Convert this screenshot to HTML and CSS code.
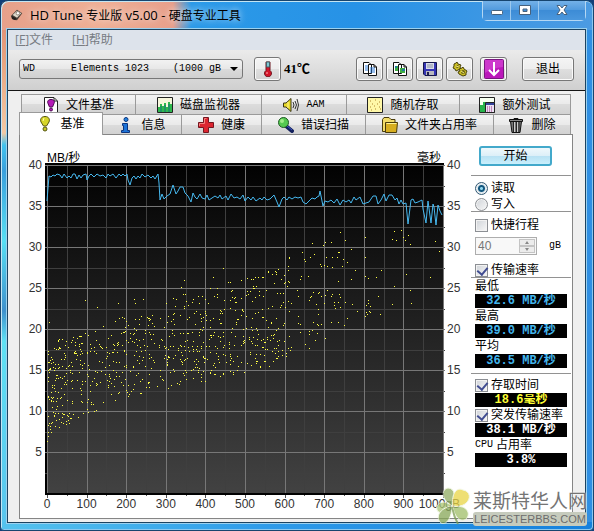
FILE: index.html
```html
<!DOCTYPE html>
<html lang="zh-CN">
<head>
<meta charset="utf-8">
<title>HD Tune 专业版 v5.00 - 硬盘专业工具</title>
<link rel="stylesheet" href="styles.css">
</head>
<body>
<div class="window">
  <header class="titlebar">
    <svg class="app-icon" viewBox="0 0 16 16"><path d="M1 9 8 2l6 4-6 8-5-1z" fill="#463c36"/><path d="M3 8 8 3l5 3-5 5z" fill="#ddd6c8"/><circle cx="9" cy="6" r="2" fill="#fff" stroke="#887c70"/><path d="m2 9 5 3-1 2-4-2z" fill="#221e1c"/></svg>
    <h1>HD Tune <span>专业版</span> v5.00 - <span>硬盘专业工具</span></h1>
    <div class="caption-buttons">
      <button aria-label="最小化"><svg viewBox="0 0 14 12"><rect x="1.500" y="6.500" width="11" height="4" rx="1" fill="#fff" stroke="#47617c"/></svg></button>
      <button aria-label="最大化"><svg viewBox="0 0 14 12"><path d="M1.500 1.500h11v9h-11zM5 5v2.500h4V5z" fill="#fff" fill-rule="evenodd" stroke="#47617c"/></svg></button>
      <button aria-label="关闭" class="close"><svg viewBox="0 0 14 12"><path d="M2 1.500h3l2 2.500 2-2.500h3L9 6l3 4.500H9L7 8l-2 2.500H2L5 6z" fill="#fff" stroke="#47617c"/></svg></button>
    </div>
  </header>
  <main class="client">
    <nav class="menubar"><a href="#file">[<u>F</u>]文件</a><a href="#help">[<u>H</u>]帮助</a></nav>
    <div class="toolbar">
      <div class="combo"><select aria-label="硬盘"><option>WD&nbsp;&nbsp;&nbsp;&nbsp;&nbsp;&nbsp;Elements 1023&nbsp;&nbsp;&nbsp;&nbsp;(1000 gB)</option></select></div>
      <button class="tool" aria-label="温度"><svg viewBox="0 0 16 16"><path d="M7 1h3v8.500a3.500 3.500 0 1 1-4 0V1z" fill="#d3152a" stroke="#6b1820"/><path d="M6.500 1h3v5h-3z" fill="#7ec8d4" stroke="#44616a"/><path d="M7 11v2" stroke="#ffb0b0"/></svg></button>
      <output class="temperature">41℃</output>
      <div class="tools">
        <button class="tool" aria-label="复制文本"><svg viewBox="0 0 16 16"><path d="M1.500 1.500H7L9.500 4v8.500h-8zM6.500 3.500H12L14.500 6v8.500h-8z" fill="#fff" stroke="#111"/><path d="M3 5h3M3 7h3M3 9h3M8 7h5M8 9h5M8 11h5" stroke="#2c7bd8"/><path d="M12 3.500V6h2.500" fill="none" stroke="#111"/></svg></button>
        <button class="tool" aria-label="复制图像"><svg viewBox="0 0 16 16"><path d="M1.500 1.500H7L9.500 4v8.500h-8zM6.500 3.500H12L14.500 6v8.500h-8z" fill="#fff" stroke="#111"/><path d="M3 5h3v5H3zM8 7h5v5H8z" fill="#3ead42"/><path d="M3 5h2v2H3zM10 8h3v2h-3z" fill="#207a9c"/><path d="M12 3.500V6h2.500" fill="none" stroke="#111"/></svg></button>
        <button class="tool" aria-label="保存"><svg viewBox="0 0 16 16"><path d="M1.500 1.500h13v13H3L1.500 13z" fill="#3434b4" stroke="#15154a"/><path d="M4 2h8v6H4z" fill="#d8dce8"/><path d="M5 4h6M5 6h6" stroke="#8990a5"/><path d="M4 10h8v4H4z" fill="#b9b9bf"/><path d="M5 11h2v3H5z" fill="#202050"/></svg></button>
        <button class="tool" aria-label="选项"><svg viewBox="0 0 16 16"><g fill="#cbbf24" stroke="#4a430b"><path d="m2 3 2-1 1-1 1 2 3 1-1 2 1 2-3 1-2 1-1-2-2-1 1-2z"/><path d="m7 8 3-1 1-1 1 2 3 2-1 2v2l-3 1-2-1-2-1-1-2 2-1z"/></g><circle cx="5.500" cy="5.500" r="1.500" fill="#6c6419"/><circle cx="11" cy="11" r="2" fill="#6c6419"/><path d="m9 10 3 2M4 5l3 1" stroke="#f3ec76"/></svg></button>
        <button class="tool last" aria-label="最小化到托盘"><svg class="large" viewBox="0 0 20 20"><rect x=".5" y=".5" width="19" height="19" rx="1" fill="#bb18ba" stroke="#7a1680"/><path d="M1 1h18v7Q8 9 1 14z" fill="#d94ed8" opacity=".6"/><path d="M10 3v13M5 11l5 5 5-5" fill="none" stroke="#fff" stroke-width="2"/></svg></button>
      </div>
      <button class="exit">退出</button>
    </div>
    <div class="workspace">
      <div class="tabs back" role="tablist">
        <button role="tab"><svg viewBox="0 0 16 16"><path d="M1.500.5H11L14.500 4v11.500h-13z" fill="#fff" stroke="#222"/><path d="M11 1v3h3" fill="none" stroke="#222"/><path d="M8 2.500c3 0 4 2 3 4L9.500 10h-3L5 6.500c-1-2 0-4 3-4z" fill="#b51ab8" stroke="#4d0c54"/><circle cx="8" cy="12.500" r="1.500" fill="#b51ab8" stroke="#4d0c54"/></svg>文件基准</button>
        <button role="tab"><svg viewBox="0 0 16 16"><path d="M.5.5h15v15H.5z" fill="#f6f6dc" stroke="#222"/><path d="M1 10h2V7h2v2h2V6h2v4h2V5h2v2h2v8H1z" fill="#2fb84d"/><path d="M4 9v6M8 8v7M12 7v8" stroke="#13707e"/></svg>磁盘监视器</button>
        <button role="tab"><svg viewBox="0 0 16 16"><path d="M.5 6H3l5-4.500v13L3 10H.5z" fill="#e7d928" stroke="#393514"/><path d="M5 5v6" stroke="#fff59b"/><path d="M10 5q2 3 0 6M12 4q3 4 0 8M14 2q3 6 0 12" fill="none" stroke="#333"/></svg><span class="latin">AAM</span></button>
        <button role="tab"><svg viewBox="0 0 16 16"><path d="M.5.5h15v15H.5z" fill="#fff8a8" stroke="#222"/><path d="M3 4h1m4-1h1m3 2h1M5 7h1m4 0h1M3 10h1m3-1h1m4 1h1m-9 3h1m3-1h1m4 0h1" stroke="#ad852c"/></svg>随机存取</button>
        <button role="tab"><svg viewBox="0 0 16 16"><path d="M.5.5h15v15H.5z" fill="#f6fff0" stroke="#222"/><path d="M1 8h3V5h3v10H1z" fill="#27b34b"/><path d="M6.500 5.500h9v10h-9z" fill="#e9e2f3" stroke="#222"/><path d="M7 6h8v2H7z" fill="#35439b"/><path d="M8 10h1m1 0h1m1 0h1M8 12h1m1 0h1m1 0h1M8 14h1m1 0h1m1 0h1" stroke="#a32a81"/></svg>额外测试</button>
      </div>
      <div class="tabs front" role="tablist">
        <button role="tab" aria-selected="true" class="active"><svg viewBox="0 0 16 16"><path d="M8 .5c4 0 5 3 4 5.500L9.500 10h-3L4 6C3 3.500 4 .5 8 .5z" fill="#d6d52a" stroke="#535411"/><path d="M7 2 6 5" stroke="#fffeb2"/><circle cx="8" cy="13" r="2" fill="#c9ca28" stroke="#535411"/></svg>基准</button>
        <button role="tab"><svg viewBox="0 0 16 16"><circle cx="8" cy="2.500" r="2" fill="#2484e0" stroke="#0c347d"/><path d="M4.500 6.500h5v7h2v2h-8v-2h2v-5h-1z" fill="#1d73d8" stroke="#0c347d"/></svg>信息</button>
        <button role="tab"><svg viewBox="0 0 16 16"><path d="M5.500.5h5v5h5v5h-5v5h-5v-5h-5v-5h5z" fill="#dc2530" stroke="#741620"/><path d="M6.500 6.500v-5h2M1.500 9V6.500h5" fill="none" stroke="#f4817f"/></svg>健康</button>
        <button role="tab"><svg viewBox="0 0 16 16"><path d="m8 9 6 5" stroke="#13205c" stroke-width="4" stroke-linecap="round"/><path d="m9 9 5 4" stroke="#3c55c5"/><circle cx="5.500" cy="5.500" r="5" fill="#55c950" stroke="#1f5924"/><circle cx="4" cy="4" r="2" fill="#a2ed8a"/></svg>错误扫描</button>
        <button role="tab"><svg viewBox="0 0 16 16"><path d="M.5 2.500 2 .5h5l2 2h4v10l-2 2H.5z" fill="#f2dc68" stroke="#493b0b"/><path d="M3.500 5.500h12l-1 10h-11z" fill="#d7ae20" stroke="#493b0b"/><path d="M4.500 6.500h10" stroke="#fff59b"/></svg>文件夹占用率</button>
        <button role="tab"><svg viewBox="0 0 16 16"><path d="M2.500 4.500h11L12 15.500H4z" fill="#777" stroke="#111"/><path d="M5.500 5v10M8.500 5v10M11 5v10" stroke="#272727"/><path d="M6.500 5v10M9.500 5v10" stroke="#ccc"/><path d="M1.500 2.500h13v2h-13zM6 1.500h4v1H6z" fill="#888" stroke="#111"/></svg>删除</button>
      </div>
      <section class="panel">
        <svg id="chart" viewBox="20 150 451 362" role="img" aria-label="传输速率与存取时间">
          <defs><linearGradient id="plotFill" x1="0" y1="0" x2="0" y2="1"><stop offset="0" stop-color="#020202"/><stop offset="1" stop-color="#424242"/></linearGradient></defs>
          <rect x="45" y="163" width="399" height="332" fill="#000"/>
          <rect x="48" y="166" width="395" height="327" fill="url(#plotFill)"/>
          <g id="grid"></g>
          <path id="access" fill="#ffff45" shape-rendering="crispEdges"/>
          <polyline fill="none" stroke="#47b9f0" points="47,201 48,188 49,176 51,177 53,175 55,176 57,174 60,175 62,178 64,174 67,178 69,176 71,178 73,174 75,174 77,179 79,175 81,178 83,175 86,174 87,180 89,176 91,174 94,177 97,174 100,176 103,175 106,178 108,174 110,176 113,174 116,178 119,174 121,176 123,174 125,176 127,174 128,180 130,185 132,178 134,176 136,179 138,176 140,178 142,174 145,177 148,175 151,178 153,176 155,179 158,174 159,183 160,200 162,194 164,199 167,196 170,194 172,188 173,185 176,194 178,191 180,187 183,187 185,193 188,196 191,202 193,193 195,197 197,199 200,194 202,198 205,199 207,195 209,200 212,198 215,196 218,198 220,195 222,199 226,196 228,200 231,194 234,198 237,197 240,199 243,195 245,201 248,197 251,200 253,197 256,201 260,198 262,200 264,197 267,200 270,199 274,195 277,202 279,207 282,199 284,197 287,200 289,197 292,199 295,197 298,198 301,197 303,202 306,204 309,201 312,198 315,199 317,197 319,196 320,191 323,206 325,201 328,202 331,200 334,203 337,199 340,205 343,200 346,202 349,200 351,203 354,197 356,200 360,197 363,204 366,203 369,202 373,196 376,196 378,204 381,200 384,194 386,201 389,195 392,195 395,200 397,198 399,204 401,200 403,204 406,203 408,224 411,200 413,199 415,203 418,202 422,200 423,209 426,223 428,201 431,223 433,204 434,207 436,225 438,205 440,211 442,215"/>
          <g id="labels" class="axis"></g>
          <text class="unit" x="47" y="162">MB/秒</text>
          <text class="unit" x="441" y="162" text-anchor="end">毫秒</text>
        </svg>
        <aside class="side">
          <button class="start">开始</button>
          <hr>
          <div class="mode">
            <label class="row"><input type="radio" name="mode" checked>读取</label>
            <label class="row"><input type="radio" name="mode">写入</label>
          </div>
          <hr>
          <label class="row gap-top"><input type="checkbox">快捷行程</label>
          <div class="stroke"><span class="spinner"><input type="text" value="40" disabled aria-label="行程容量"><span class="arrows"><button disabled aria-label="增加"></button><button disabled aria-label="减少" class="down"></button></span></span><span class="latin">gB</span></div>
          <label class="row"><input type="checkbox" checked>传输速率</label>
          <hr class="tight">
          <div class="row">最低</div><output class="value rate">32.6 MB/秒</output>
          <div class="row">最高</div><output class="value rate">39.0 MB/秒</output>
          <div class="row">平均</div><output class="value rate">36.5 MB/秒</output>
          <hr class="mid">
          <label class="row"><input type="checkbox" checked>存取时间</label><output class="value time">18.6毫秒</output>
          <label class="row"><input type="checkbox" checked>突发传输速率</label><output class="value">38.1 MB/秒</output>
          <div class="row"><span class="latin">CPU</span> 占用率</div><output class="value">3.8%</output>
        </aside>
      </section>
    </div>
  </main>
  <div class="watermark">
    <svg viewBox="0 0 36 40"><g stroke="#eef5dc" stroke-width="1"><path d="M16 19C5 13 5 2 12 1c7 0 8 9 4 18z" fill="#8fac61"/><path d="M16 19C7 11-1 17 1 23c2 5 10 2 15-4z" fill="#a9c574"/><path d="M16 19C3 21-1 31 5 36c6 3 11-7 11-17z" fill="#86a656"/><path d="M17 20c12-3 18 5 14 11-5 6-13-1-14-11z" fill="#9fbe68"/><path d="M17 19C15 6 21 0 27 3c7 1 9 9 2 14-3 2-8 3-12 2z" fill="#e9d545"/></g><path d="M16 20q2 10 6 17" fill="none" stroke="#7c9c51" stroke-width="2"/></svg>
    <div><strong>莱斯特华人网</strong><span>LEICESTERBBS.COM</span></div>
  </div>
</div>
<script src="chart.js"></script>
</body>
</html>
```
FILE: styles.css
```css
* { box-sizing: border-box; }
body {
  margin: 0;
  background: #123f78;
  color: #000;
  font: 12px/16px "Liberation Sans", "Noto Sans CJK SC", sans-serif;
}
button, input, select { font: inherit; color: inherit; margin: 0; padding: 0; }
.window {
  position: relative;
  display: flex;
  flex-direction: column;
  min-height: 100vh;
  padding: 0 7px 7px 6px;
  border: 1px solid #17456f;
  border-radius: 8px 8px 4px 4px;
  background:
    linear-gradient(90deg, #e6a08a 0, #efb096 100px, #e79f8b 172px, #2b9ae8 190px, #2792e6 60%, #4c9be2) top / 100% 29px no-repeat,
    linear-gradient(90deg, #55c3ee, #2e9be9 45%, #1580dc) bottom / 100% 8px no-repeat,
    linear-gradient(180deg, #dd8570 0, #e8a480 60px, #f3c9a5 132px, #42c3ef 144px, #3a9fdc 170px, #57dff4 240px, #3f91cd 310px, #5fe0f4 340px, #58c4ee) left / 8px 100% no-repeat,
    #2f8fe3;
  box-shadow: inset 1px 1px 0 #c4e5f3, inset -1px -1px 0 #8cc8ef;
}
.titlebar { display: flex; height: 28px; padding: 0 0 0 3px; }
.app-icon { width: 14px; height: 14px; margin-top: 7px; }
.titlebar h1 {
  flex: 1;
  margin: 5px 0 0 6px;
  font: 13px/18px "Open Sans", "Noto Sans CJK SC", sans-serif;
  text-shadow: 0 0 6px #fff8, 0 0 8px #fff8;
}
.titlebar h1 span { font-size: 12px; }
.caption-buttons {
  display: flex;
  height: 20px;
  border: 1px solid #b4d7f3;
  border-top: 0;
  border-radius: 0 0 5px 5px;
}
.caption-buttons button {
  width: 28px;
  border: 0;
  border-right: 1px solid #9bc8ee;
  background: linear-gradient(#74b1e8, #4f99dd 50%, #3d8cd6 50%, #4a97dd);
}
.caption-buttons .close { width: 46px; border: 0; }
.caption-buttons svg { width: 14px; height: 12px; margin-top: 3px; }
.client {
  display: flex;
  flex: 1;
  flex-direction: column;
  border: 1px solid #1c4360;
  background: #efefef;
  box-shadow: 0 0 0 1px #9bd1ef;
}
.menubar {
  display: flex;
  gap: 19px;
  height: 20px;
  padding: 0 7px;
  background: #dde3eb;
  font: 12px/20px "Open Sans", "Noto Sans CJK SC", sans-serif;
}
.menubar a { color: #777c83; text-decoration: none; }
.toolbar {
  display: flex;
  align-items: center;
  height: 41px;
  padding: 0 11px 3px;
  border-bottom: 1px solid #161616;
  background: linear-gradient(#ebebeb, #cfcfcf);
}
.combo { position: relative; flex: 0 1 224px; }
.combo select {
  width: 100%;
  height: 20px;
  padding: 0 20px 0 3px;
  appearance: none;
  border: 1px solid #777;
  border-radius: 3px;
  background: linear-gradient(#f2f2f2, #e7e7e7 50%, #dadada 50%, #d0d0d0);
  font: 10px "Liberation Mono", monospace;
}
.combo::after {
  position: absolute;
  top: 8px;
  right: 5px;
  border: 4px solid transparent;
  border-top-color: #000;
  content: "";
}
.tool, .exit {
  height: 24px;
  border: 1px solid #777;
  border-radius: 3px;
  background: linear-gradient(#f4f4f4, #ededed 50%, #dfdfdf 50%, #d4d4d4);
  box-shadow: inset 0 0 0 1px #fafafa;
}
.tool { display: grid; place-items: center; width: 27px; }
.tool svg { width: 16px; height: 16px; }
.tool svg.large { width: 20px; height: 20px; }
.combo + .tool { margin-left: 11px; }
.temperature { margin-left: 3px; font: bold 13px/16px "Liberation Serif", "Noto Sans CJK SC", serif; }
.tools { display: flex; gap: 3px; margin-left: auto; }
.tools .last { margin-left: 4px; }
.exit { width: 52px; margin-left: 15px; }
.workspace { flex: 1; padding: 3px 12px 3px 11px; }
.tabs { display: grid; margin: 0 2px; }
.tabs button {
  display: flex;
  align-items: center;
  justify-content: center;
  gap: 7px;
  height: 20px;
  border: 1px solid #9a9a9a;
  border-width: 1px 1px 0 0;
  background: linear-gradient(#f3f3f3, #eaeaea 50%, #dcdcdc 50%, #d2d2d2);
  white-space: nowrap;
}
.tabs button:first-child { border-left-width: 1px; }
.tabs svg { width: 16px; height: 16px; flex: none; }
.back { grid-template-columns: 115fr 126fr 85fr 113fr 111fr; }
.front { grid-template-columns: 82fr 79fr 80fr 104fr 128fr 77fr; }
.tabs .active {
  position: relative;
  height: 23px;
  margin: -2px 0 -1px -2px;
  background: #fff;
}
.latin { font: 10px/16px "Liberation Mono", monospace; }
.panel {
  display: flex;
  min-height: 385px;
  border: 1px solid #858585;
  background: #fff;
}
#chart { flex: 1; min-width: 0; align-self: flex-start; margin-top: 15px; }
.axis { font: 12px "Liberation Sans", sans-serif; fill: #333; }
.unit { font: 12px "Liberation Sans", "Noto Sans CJK SC", sans-serif; }
.side { width: 101px; padding: 11px 1px 0 0; }
.side hr { height: 1px; margin: 0; border: 0; background: #929292; }
.start {
  display: block;
  width: 73px;
  height: 20px;
  margin: 0 0 9px 8px;
  border: 2px solid #43a9cb;
  border-radius: 3px;
  background: linear-gradient(#eff8fc, #dceff8 50%, #b8e1f3 50%, #c9effc);
  line-height: 14px;
}
.mode { padding: 4px 0 0; }
.mode .row { height: 16px; }
.mode + hr { margin-top: -1px; }
.row { display: flex; align-items: center; gap: 3px; height: 16px; margin-left: 4px; white-space: nowrap; }
.row input {
  flex: none;
  width: 13px;
  height: 13px;
  appearance: none;
  border: 1px solid #8c8f94;
  background: linear-gradient(135deg, #cfd3d8, #f8f8f8);
  box-shadow: inset 0 0 0 1px #f2f2f2;
}
.row input[type="radio"] { border-radius: 50%; }
.row input[type="radio"]:checked { border-color: #315873; background: radial-gradient(circle at 50% 50%, #8ed6ef 0 1px, #14577e 2px 3px, #d6e6ee 4px); }
.row input[type="checkbox"]:checked::before {
  display: block;
  width: 5px;
  height: 8px;
  margin: 0 0 0 3px;
  border: solid #414d91;
  border-width: 0 2px 2px 0;
  transform: rotate(40deg);
  content: "";
}
.gap-top { margin-top: 5px; }
.stroke { display: flex; align-items: center; gap: 12px; margin: 4px 0 7px 4px; }
.spinner { display: flex; width: 62px; height: 18px; padding: 1px; border: 1px solid #adadad; background: #f8f8f8; }
.spinner input { min-width: 0; flex: 1; padding-left: 1px; border: 0; background: transparent; color: #777; }
.arrows { display: grid; width: 16px; }
.arrows button { display: grid; place-items: center; border: 1px solid #c4c4c4; background: #ececec; }
.arrows button::before { border: 2px solid transparent; border-top-width: 0; border-bottom: 3px solid #888; content: ""; }
.arrows .down::before { transform: rotate(180deg); }
.side .tight { margin-top: -1px; }
.side .mid { margin: 5px 0 3px; }
.value {
  display: block;
  height: 14px;
  margin: 0 4px;
  overflow: hidden;
  background: #000;
  color: #fff;
  font: bold 12px/14px "Liberation Mono", "Noto Sans CJK SC", monospace;
  text-align: center;
  white-space: nowrap;
}
.rate { color: #43b6ee; }
.time { color: #ffff35; }
.watermark { position: absolute; right: 6px; bottom: 3px; display: flex; gap: 1px; }
.watermark svg { width: 36px; height: 40px; opacity: .75; }
.watermark div { display: flex; flex-direction: column; }
.watermark strong { color: #747474; font: 400 19px/25px "Noto Sans CJK SC", sans-serif; text-shadow: 0 0 2px #fff; }
.watermark span { border-radius: 3px; background: #c6cbbd; color: #6c6c6c; font: 11px/14px "Liberation Sans", sans-serif; text-align: center; }
```
FILE: chart.js
```js
const SVG_NS = "http://www.w3.org/2000/svg";
const grid = document.getElementById("grid");
const labels = document.getElementById("labels");

function add(parent, tag, attributes, text) {
  const node = document.createElementNS(SVG_NS, tag);
  for (const key in attributes) node.setAttribute(key, attributes[key]);
  if (text !== undefined) node.textContent = text;
  parent.append(node);
}

// Minor lines first, so that the major ones lie over them.
for (const major of [false, true]) {
  const color = major ? "#777" : "#3f3f3f";
  for (let i = 0; i <= 20; i++) {
    if ((i % 2 === 0) !== major) continue;
    const x = Math.round(47 + i * 19.8);
    add(grid, "rect", { x, y: 165, width: 1, height: 328, fill: color });
    add(grid, "rect", { x, y: 495, width: 1, height: major ? 3 : 1, fill: "#555" });
  }
  for (let i = 0; i < 16; i++) {
    if ((i % 2 === 0) !== major) continue;
    const y = Math.round(165 + i * 20.5);
    add(grid, "rect", { x: 45, y, width: 400, height: 1, fill: color });
  }
}
for (let i = 0; i < 10; i++) {
  add(labels, "text", { x: 47 + i * 39.6, y: 508, "text-anchor": "middle" }, i * 100);
}
add(labels, "text", { x: 460, y: 508, "text-anchor": "end" }, "1000gB");
for (let i = 0; i < 8; i++) {
  const y = Math.round(169 + i * 41);
  add(labels, "text", { x: 42, y, "text-anchor": "end" }, 40 - i * 5);
  add(labels, "text", { x: 447, y }, 40 - i * 5);
}

// Access times: a dense band on the left, single samples on the right.
const upper = [[47, 352], [60, 337], [80, 334], [100, 326], [115, 314], [130, 318], [150, 315], [180, 293], [200, 292], [220, 284], [262, 272], [291, 262]];
const lower = [[47, 440], [65, 430], [80, 418], [100, 411], [126, 397], [165, 390], [200, 384], [240, 373], [262, 371], [291, 350]];
function at(line, x) {
  const k = Math.max(1, line.findIndex(p => p[0] >= x));
  const [a, b] = [line[k - 1], line[k]];
  return a[1] + (b[1] - a[1]) * (x - a[0]) / (b[0] - a[0]);
}
let seed = 7;
const random = () => (seed = seed * 16807 % 2147483647) / 2147483647;
const points = [];
for (let i = 0; i < 740; i++) {
  const x = 48 + 242 * Math.pow(random(), 1.25);
  const top = at(upper, x);
  points.push([x, top + (at(lower, x) - top) * random()]);
}
points.push([49, 322], [85, 300], [97, 307], [118, 303], [134, 299], [135, 303], [143, 299], [184, 280], [181, 287], [213, 277], [223, 268], [47, 441]);
const samples = "289,257 289,258 302,252 304,259 305,261 310,257 312,243 314,254 323,245 325,242 320,264 321,266 324,265 327,266 326,257 331,242 332,267 332,257 337,257 338,252 339,252 340,232 345,240 343,259 342,266 347,262 351,249 355,270 365,237 365,257 365,276 368,278 376,277 381,270 351,279 338,281 308,276 301,276 300,279 392,239 394,231 396,240 401,230 403,237 405,240 408,235 410,244 435,241 439,251 430,277 406,274 394,286 410,290 411,303 392,304 378,296 368,300 368,303 366,305 370,306 366,312 367,314 369,311 370,312 357,311 380,314 365,316 352,304 345,302 338,302 334,302 334,305 335,308 339,294 340,297 332,294 331,296 327,290 325,295 321,296 318,293 319,292 313,292 311,296 310,297 316,304 324,303 318,309 309,300 297,290 298,296 291,303 340,307 347,318 344,325 338,322 331,322 318,314 317,324 318,325 321,324 313,322 317,333 309,334 312,330 289,336 298,323 300,324 298,316 300,332 325,338 291,347 286,356 282,350 276,358 275,353 278,345 270,340 309,331 305,344 309,348 315,340";
for (const sample of samples.split(" ")) points.push(sample.split(",").map(Number));
document.getElementById("access").setAttribute("d",
  points.map(([x, y]) => `M${Math.round(x)} ${Math.round(y)}h1v1h-1z`).join(""));
```
